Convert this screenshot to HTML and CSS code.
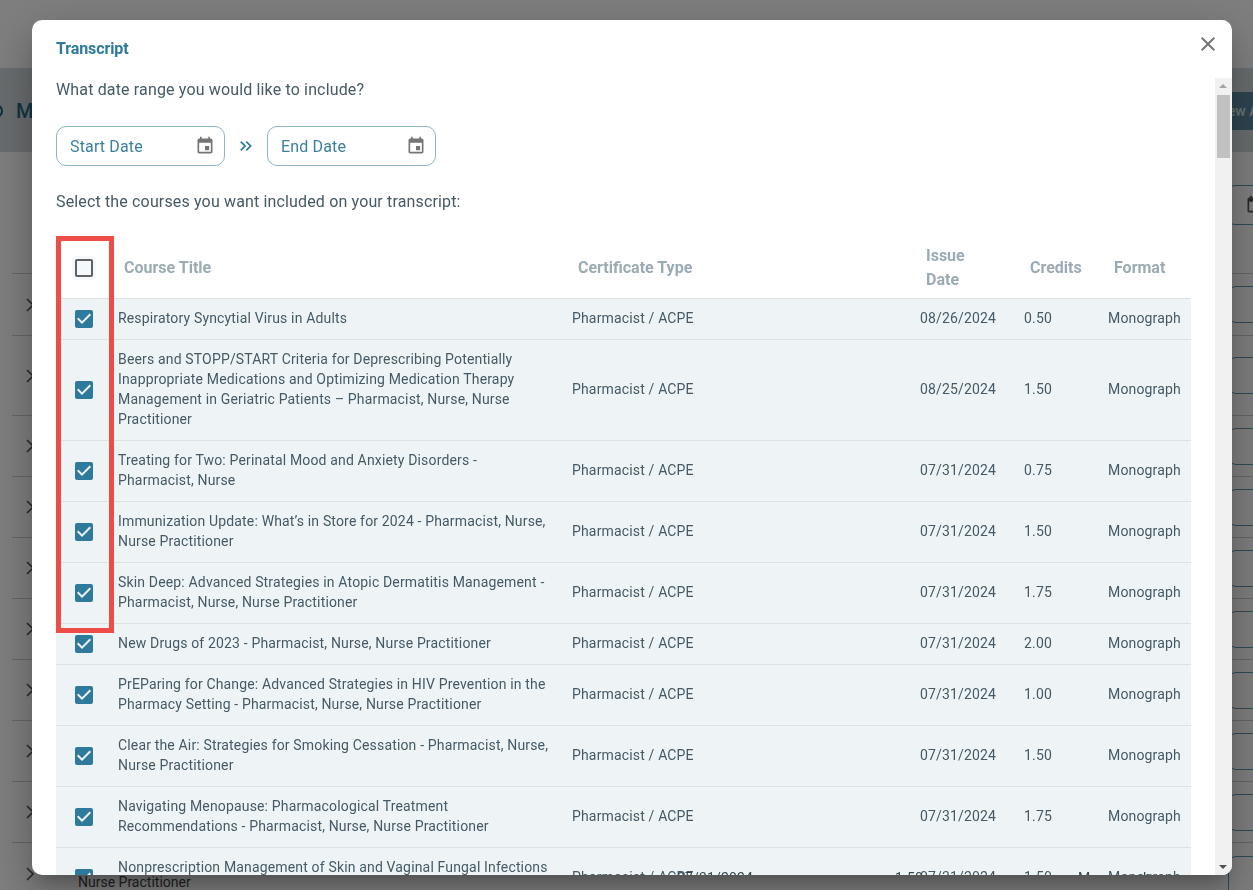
FILE: index.html
```html
<!DOCTYPE html>
<html lang="en">
  <head>
    <meta charset="UTF-8" />
    <meta name="viewport" content="width=device-width, initial-scale=1.0" />
    <title>Transcript</title>
    <link rel="stylesheet" href="styles.css">
  </head>
  <body>
    <div class="page">
      <div class="topbar"></div>
      <div class="band">
        <span class="band-icon"></span>
        <h1 class="band-title">My Certificates</h1>
        <button class="new-btn">New Activity</button>
      </div>
      <div class="toolbar">
        <div class="bg-input">
          <svg class="bg-cal" viewBox="0 0 24 24"><path d="M17 12h-5v5h5v-5zM16 1v2H8V1H6v2H5c-1.11 0-1.99.9-1.99 2L3 19c0 1.1.89 2 2 2h14c1.1 0 2-.9 2-2V5c0-1.1-.9-2-2-2h-1V1h-2zm3 18H5V8h14v11z"/></svg>
        </div>
      </div>
      <div class="rows">
        <div class="row row-first"><svg class="chev" viewBox="0 0 8 14"><path d="M1 1l6 6-6 6"/></svg><span class="row-btn"></span></div>
        <div class="row row-tall"><svg class="chev" viewBox="0 0 8 14"><path d="M1 1l6 6-6 6"/></svg><span class="row-btn"></span></div>
        <div class="row"><svg class="chev" viewBox="0 0 8 14"><path d="M1 1l6 6-6 6"/></svg><span class="row-btn"></span></div>
        <div class="row"><svg class="chev" viewBox="0 0 8 14"><path d="M1 1l6 6-6 6"/></svg><span class="row-btn"></span></div>
        <div class="row"><svg class="chev" viewBox="0 0 8 14"><path d="M1 1l6 6-6 6"/></svg><span class="row-btn"></span></div>
        <div class="row"><svg class="chev" viewBox="0 0 8 14"><path d="M1 1l6 6-6 6"/></svg><span class="row-btn"></span></div>
        <div class="row"><svg class="chev" viewBox="0 0 8 14"><path d="M1 1l6 6-6 6"/></svg><span class="row-btn"></span></div>
        <div class="row"><svg class="chev" viewBox="0 0 8 14"><path d="M1 1l6 6-6 6"/></svg><span class="row-btn"></span></div>
        <div class="row"><svg class="chev" viewBox="0 0 8 14"><path d="M1 1l6 6-6 6"/></svg><span class="row-btn"></span></div>
        <div class="row row-last">
          <svg class="chev" viewBox="0 0 8 14"><path d="M1 1l6 6-6 6"/></svg>
          <span class="row-title">Nurse Practitioner</span>
          <span class="row-btn"></span>
        </div>
      </div>
    </div>

    <div class="overlay"></div>

    <div class="modal">
      <div class="modal-head">
        <h2>Transcript</h2>
        <button class="close-btn" aria-label="Close">
          <svg viewBox="0 0 24 24"><path d="M19 6.41L17.59 5 12 10.59 6.41 5 5 6.41 10.59 12 5 17.59 6.41 19 12 13.41 17.59 19 19 17.59 13.41 12z"/></svg>
        </button>
      </div>
      <div class="modal-body">
        <div class="modal-content">
          <p class="prompt">What date range you would like to include?</p>
          <div class="date-range">
            <div class="date-input">
              <span>Start Date</span>
              <svg viewBox="0 0 24 24"><path d="M17 12h-5v5h5v-5zM16 1v2H8V1H6v2H5c-1.11 0-1.99.9-1.99 2L3 19c0 1.1.89 2 2 2h14c1.1 0 2-.9 2-2V5c0-1.1-.9-2-2-2h-1V1h-2zm3 18H5V8h14v11z"/></svg>
            </div>
            <svg class="range-arrow" viewBox="0 0 24 24"><path d="M6.41 6L5 7.41 9.58 12 5 16.59 6.41 18l6-6z"/><path d="M13 6l-1.41 1.41L16.17 12l-4.58 4.59L13 18l6-6z"/></svg>
            <div class="date-input">
              <span>End Date</span>
              <svg viewBox="0 0 24 24"><path d="M17 12h-5v5h5v-5zM16 1v2H8V1H6v2H5c-1.11 0-1.99.9-1.99 2L3 19c0 1.1.89 2 2 2h14c1.1 0 2-.9 2-2V5c0-1.1-.9-2-2-2h-1V1h-2zm3 18H5V8h14v11z"/></svg>
            </div>
          </div>
          <p class="prompt prompt-courses">Select the courses you want included on your transcript:</p>

          <div class="table-wrap">
            <table class="courses">
              <colgroup>
                <col class="col-check" />
                <col class="col-title" />
                <col class="col-type" />
                <col class="col-date" />
                <col class="col-credits" />
                <col class="col-format" />
              </colgroup>
              <thead>
                <tr>
                  <th><svg class="box box-empty" viewBox="0 0 24 24"><path d="M19 5v14H5V5h14m0-2H5c-1.1 0-2 .9-2 2v14c0 1.1.9 2 2 2h14c1.1 0 2-.9 2-2V5c0-1.1-.9-2-2-2z"/></svg></th>
                  <th>Course Title</th>
                  <th>Certificate Type</th>
                  <th>Issue<br>Date</th>
                  <th>Credits</th>
                  <th>Format</th>
                </tr>
              </thead>
              <tbody>
                <tr>
                  <td><svg class="box" viewBox="0 0 24 24"><path d="M19 3H5c-1.11 0-2 .9-2 2v14c0 1.1.89 2 2 2h14c1.11 0 2-.9 2-2V5c0-1.1-.89-2-2-2zm-9 14l-5-5 1.41-1.41L10 14.17l7.59-7.59L19 8l-9 9z"/></svg></td>
                  <td>Respiratory Syncytial Virus in Adults</td>
                  <td>Pharmacist / ACPE</td>
                  <td>08/26/2024</td>
                  <td>0.50</td>
                  <td>Monograph</td>
                </tr>
                <tr>
                  <td><svg class="box" viewBox="0 0 24 24"><path d="M19 3H5c-1.11 0-2 .9-2 2v14c0 1.1.89 2 2 2h14c1.11 0 2-.9 2-2V5c0-1.1-.89-2-2-2zm-9 14l-5-5 1.41-1.41L10 14.17l7.59-7.59L19 8l-9 9z"/></svg></td>
                  <td>Beers and STOPP/START Criteria for Deprescribing Potentially Inappropriate Medications and Optimizing Medication Therapy Management in Geriatric Patients – Pharmacist, Nurse, Nurse Practitioner</td>
                  <td>Pharmacist / ACPE</td>
                  <td>08/25/2024</td>
                  <td>1.50</td>
                  <td>Monograph</td>
                </tr>
                <tr>
                  <td><svg class="box" viewBox="0 0 24 24"><path d="M19 3H5c-1.11 0-2 .9-2 2v14c0 1.1.89 2 2 2h14c1.11 0 2-.9 2-2V5c0-1.1-.89-2-2-2zm-9 14l-5-5 1.41-1.41L10 14.17l7.59-7.59L19 8l-9 9z"/></svg></td>
                  <td>Treating for Two: Perinatal Mood and Anxiety Disorders - Pharmacist, Nurse</td>
                  <td>Pharmacist / ACPE</td>
                  <td>07/31/2024</td>
                  <td>0.75</td>
                  <td>Monograph</td>
                </tr>
                <tr>
                  <td><svg class="box" viewBox="0 0 24 24"><path d="M19 3H5c-1.11 0-2 .9-2 2v14c0 1.1.89 2 2 2h14c1.11 0 2-.9 2-2V5c0-1.1-.89-2-2-2zm-9 14l-5-5 1.41-1.41L10 14.17l7.59-7.59L19 8l-9 9z"/></svg></td>
                  <td>Immunization Update: What’s in Store for 2024 - Pharmacist, Nurse, Nurse Practitioner</td>
                  <td>Pharmacist / ACPE</td>
                  <td>07/31/2024</td>
                  <td>1.50</td>
                  <td>Monograph</td>
                </tr>
                <tr>
                  <td><svg class="box" viewBox="0 0 24 24"><path d="M19 3H5c-1.11 0-2 .9-2 2v14c0 1.1.89 2 2 2h14c1.11 0 2-.9 2-2V5c0-1.1-.89-2-2-2zm-9 14l-5-5 1.41-1.41L10 14.17l7.59-7.59L19 8l-9 9z"/></svg></td>
                  <td>Skin Deep: Advanced Strategies in Atopic Dermatitis Management - Pharmacist, Nurse, Nurse Practitioner</td>
                  <td>Pharmacist / ACPE</td>
                  <td>07/31/2024</td>
                  <td>1.75</td>
                  <td>Monograph</td>
                </tr>
                <tr>
                  <td><svg class="box" viewBox="0 0 24 24"><path d="M19 3H5c-1.11 0-2 .9-2 2v14c0 1.1.89 2 2 2h14c1.11 0 2-.9 2-2V5c0-1.1-.89-2-2-2zm-9 14l-5-5 1.41-1.41L10 14.17l7.59-7.59L19 8l-9 9z"/></svg></td>
                  <td>New Drugs of 2023 - Pharmacist, Nurse, Nurse Practitioner</td>
                  <td>Pharmacist / ACPE</td>
                  <td>07/31/2024</td>
                  <td>2.00</td>
                  <td>Monograph</td>
                </tr>
                <tr>
                  <td><svg class="box" viewBox="0 0 24 24"><path d="M19 3H5c-1.11 0-2 .9-2 2v14c0 1.1.89 2 2 2h14c1.11 0 2-.9 2-2V5c0-1.1-.89-2-2-2zm-9 14l-5-5 1.41-1.41L10 14.17l7.59-7.59L19 8l-9 9z"/></svg></td>
                  <td>PrEParing for Change: Advanced Strategies in HIV Prevention in the Pharmacy Setting - Pharmacist, Nurse, Nurse Practitioner</td>
                  <td>Pharmacist / ACPE</td>
                  <td>07/31/2024</td>
                  <td>1.00</td>
                  <td>Monograph</td>
                </tr>
                <tr>
                  <td><svg class="box" viewBox="0 0 24 24"><path d="M19 3H5c-1.11 0-2 .9-2 2v14c0 1.1.89 2 2 2h14c1.11 0 2-.9 2-2V5c0-1.1-.89-2-2-2zm-9 14l-5-5 1.41-1.41L10 14.17l7.59-7.59L19 8l-9 9z"/></svg></td>
                  <td>Clear the Air: Strategies for Smoking Cessation - Pharmacist, Nurse, Nurse Practitioner</td>
                  <td>Pharmacist / ACPE</td>
                  <td>07/31/2024</td>
                  <td>1.50</td>
                  <td>Monograph</td>
                </tr>
                <tr>
                  <td><svg class="box" viewBox="0 0 24 24"><path d="M19 3H5c-1.11 0-2 .9-2 2v14c0 1.1.89 2 2 2h14c1.11 0 2-.9 2-2V5c0-1.1-.89-2-2-2zm-9 14l-5-5 1.41-1.41L10 14.17l7.59-7.59L19 8l-9 9z"/></svg></td>
                  <td>Navigating Menopause: Pharmacological Treatment Recommendations - Pharmacist, Nurse, Nurse Practitioner</td>
                  <td>Pharmacist / ACPE</td>
                  <td>07/31/2024</td>
                  <td>1.75</td>
                  <td>Monograph</td>
                </tr>
                <tr>
                  <td><svg class="box" viewBox="0 0 24 24"><path d="M19 3H5c-1.11 0-2 .9-2 2v14c0 1.1.89 2 2 2h14c1.11 0 2-.9 2-2V5c0-1.1-.89-2-2-2zm-9 14l-5-5 1.41-1.41L10 14.17l7.59-7.59L19 8l-9 9z"/></svg></td>
                  <td>Nonprescription Management of Skin and Vaginal Fungal Infections - Pharmacist, Nurse, Nurse Practitioner</td>
                  <td>Pharmacist / ACPE</td>
                  <td>07/31/2024</td>
                  <td>1.50</td>
                  <td>Monograph</td>
                </tr>
              </tbody>
            </table>
            <div class="highlight"></div>
          </div>
        </div>
        <div class="scrollbar">
          <span class="scroll-up"></span>
          <span class="scroll-thumb"></span>
          <span class="scroll-down"></span>
        </div>
      </div>
      <span class="ghost ghost-date">07/31/2024</span>
      <span class="ghost ghost-credits">1.50</span>
      <span class="ghost ghost-format">Monograph</span>
    </div>
  </body>
</html>
```

FILE: styles.css
```css
* {
  margin: 0;
  padding: 0;
  box-sizing: border-box;
}

body {
  font-family: "Roboto", sans-serif;
  background: #ffffff;
  color: #455a64;
  overflow: hidden;
}

/* Page behind the dialog */
.page {
  height: 100vh;
  overflow: hidden;
}

.topbar {
  height: 69px;
  border-bottom: 1px solid #d8d8d8;
}

.band {
  display: flex;
  align-items: center;
  height: 83px;
  background: #d4dade;
}

.band-icon {
  width: 14px;
  height: 14px;
  margin-left: -11px;
  border: 2px solid #1f5f7f;
  border-radius: 50%;
}

.band-title {
  margin-left: 13px;
  font-size: 20px;
  font-weight: 500;
  color: #1f6a8c;
  white-space: nowrap;
}

.new-btn {
  margin-left: auto;
  margin-right: -74px;
  width: 140px;
  height: 38px;
  border: none;
  border-radius: 4px;
  background: #5c8aa0;
  color: #dfe6ea;
  font-family: "Roboto", sans-serif;
  font-size: 14px;
  font-weight: 500;
}

.toolbar {
  display: flex;
  justify-content: flex-end;
  height: 121px;
  padding-top: 33px;
}

.bg-input {
  display: flex;
  align-items: center;
  width: 80px;
  height: 40px;
  margin-right: -54px;
  padding-left: 17px;
  border: 1px solid #5f97b2;
  border-radius: 8px;
}

.bg-cal {
  width: 20px;
  height: 20px;
  fill: #555555;
}

.rows {
  margin-left: 12px;
}

.row {
  display: flex;
  align-items: center;
  justify-content: space-between;
  height: 61px;
  padding-left: 14px;
  border-top: 1px solid #cccccc;
}

.row-first {
  height: 62px;
}

.row-tall {
  height: 80px;
}

.row-last {
  height: 90px;
  align-items: flex-start;
}

.chev {
  width: 8px;
  height: 14px;
  fill: none;
  stroke: #555555;
  stroke-width: 1.6;
}

.row-last .chev {
  margin-top: 24px;
}

.row-btn {
  width: 60px;
  height: 37px;
  margin-right: -35px;
  border: 1px solid #5f97b2;
  border-radius: 8px;
}

.row-last .row-btn {
  margin-top: 13px;
  height: 60px;
}

.row-title {
  position: absolute;
  left: 78px;
  top: 872px;
  font-size: 14px;
  line-height: 20px;
  color: #444444;
}

.overlay {
  position: fixed;
  inset: 0;
  background: rgba(0, 0, 0, 0.5);
}

/* Dialog */
.modal {
  position: fixed;
  left: 32px;
  top: 20px;
  width: 1200px;
  height: 855px;
  display: flex;
  flex-direction: column;
  background: #ffffff;
  border-radius: 10px;
  overflow: hidden;
  box-shadow: 0 11px 15px -7px rgba(0, 0, 0, 0.2), 0 24px 38px 3px rgba(0, 0, 0, 0.14), 0 9px 46px 8px rgba(0, 0, 0, 0.12);
}

.modal-head {
  display: flex;
  align-items: flex-start;
  justify-content: space-between;
  flex: none;
  height: 58px;
  padding: 19px 12px 0 24px;
}

.modal-head h2 {
  font-size: 16px;
  line-height: 20px;
  font-weight: 700;
  letter-spacing: -0.1px;
  color: #2e7a9c;
}

.close-btn {
  width: 24px;
  height: 24px;
  margin-top: -7px;
  border: none;
  background: none;
}

.close-btn svg {
  display: block;
  width: 24px;
  height: 24px;
  fill: #757575;
}

.modal-body {
  display: flex;
  flex: 1;
  min-height: 0;
}

.modal-content {
  flex: 1;
  min-width: 0;
  padding: 0 24px;
  overflow: hidden;
}

.prompt {
  font-size: 16px;
  line-height: 24px;
  letter-spacing: 0.15px;
  color: #455a64;
}

.date-range {
  display: flex;
  align-items: center;
  margin-top: 24px;
}

.date-input {
  display: flex;
  align-items: center;
  justify-content: space-between;
  width: 169px;
  height: 40px;
  padding: 0 9px 0 13px;
  border: 1px solid #8db4c9;
  border-radius: 10px;
  font-size: 16px;
  letter-spacing: 0.15px;
  color: #3b7f9f;
}

.date-input svg {
  width: 20px;
  height: 20px;
  fill: #757575;
}

.range-arrow {
  width: 20px;
  height: 20px;
  margin: 0 11px;
  fill: #2e7a9c;
}

.prompt-courses {
  margin-top: 24px;
}

.table-wrap {
  position: relative;
  margin-top: 22px;
}

.courses {
  width: 1135px;
  table-layout: fixed;
  border-collapse: separate;
  border-spacing: 0;
  font-size: 14px;
  line-height: 20px;
  letter-spacing: 0.16px;
}

.col-check {
  width: 56px;
}

.col-title {
  width: 454px;
}

.col-type {
  width: 348px;
}

.col-date {
  width: 104px;
}

.col-credits {
  width: 84px;
}

.col-format {
  width: 89px;
}

.courses th {
  height: 63px;
  padding: 2px 12px 0;
  border-bottom: 1px solid #dde1e4;
  font-size: 16px;
  line-height: 24px;
  font-weight: 700;
  letter-spacing: 0;
  text-align: left;
  color: #9aabb3;
}

.courses td {
  padding: 9px 6px 11px;
  border-bottom: 1px solid #dde1e4;
  background: #eef3f6;
  color: #455a64;
}

.courses td:nth-child(2) {
  padding-right: 16px;
}

.courses th:first-child,
.courses td:first-child {
  padding: 0;
  text-align: center;
}

.courses th:first-child {
  padding-top: 2px;
}

.box {
  display: block;
  width: 24px;
  height: 24px;
  margin: 0 auto;
  fill: #2e7a9c;
}

.box-empty {
  fill: #616161;
  background: radial-gradient(circle at center, #f5f8fa 0 15px, transparent 15px);
  overflow: visible;
}

/* Annotation drawn over the checkbox column */
.highlight {
  position: absolute;
  left: 0;
  top: 0;
  width: 58px;
  height: 397px;
  border: 5px solid #ee4c46;
  pointer-events: none;
}

.scrollbar {
  position: relative;
  flex: none;
  width: 17px;
  background: #f1f1f1;
}

.scroll-thumb {
  position: absolute;
  left: 2px;
  top: 17px;
  width: 13px;
  height: 63px;
  background: #c1c1c1;
}

.scroll-up {
  position: absolute;
  left: 4px;
  top: 6px;
  border: 4px solid transparent;
  border-top: 0;
  border-bottom: 4px solid #a3a3a3;
}

.scroll-down {
  position: absolute;
  left: 4px;
  bottom: 6px;
  border: 4px solid transparent;
  border-bottom: 0;
  border-top: 4px solid #505050;
}

.ghost {
  position: absolute;
  top: 848px;
  font-size: 14px;
  line-height: 20px;
  letter-spacing: 0.16px;
  color: #37474f;
}

.ghost-date {
  left: 645px;
}

.ghost-credits {
  left: 863px;
}

.ghost-format {
  left: 1046px;
}
```
